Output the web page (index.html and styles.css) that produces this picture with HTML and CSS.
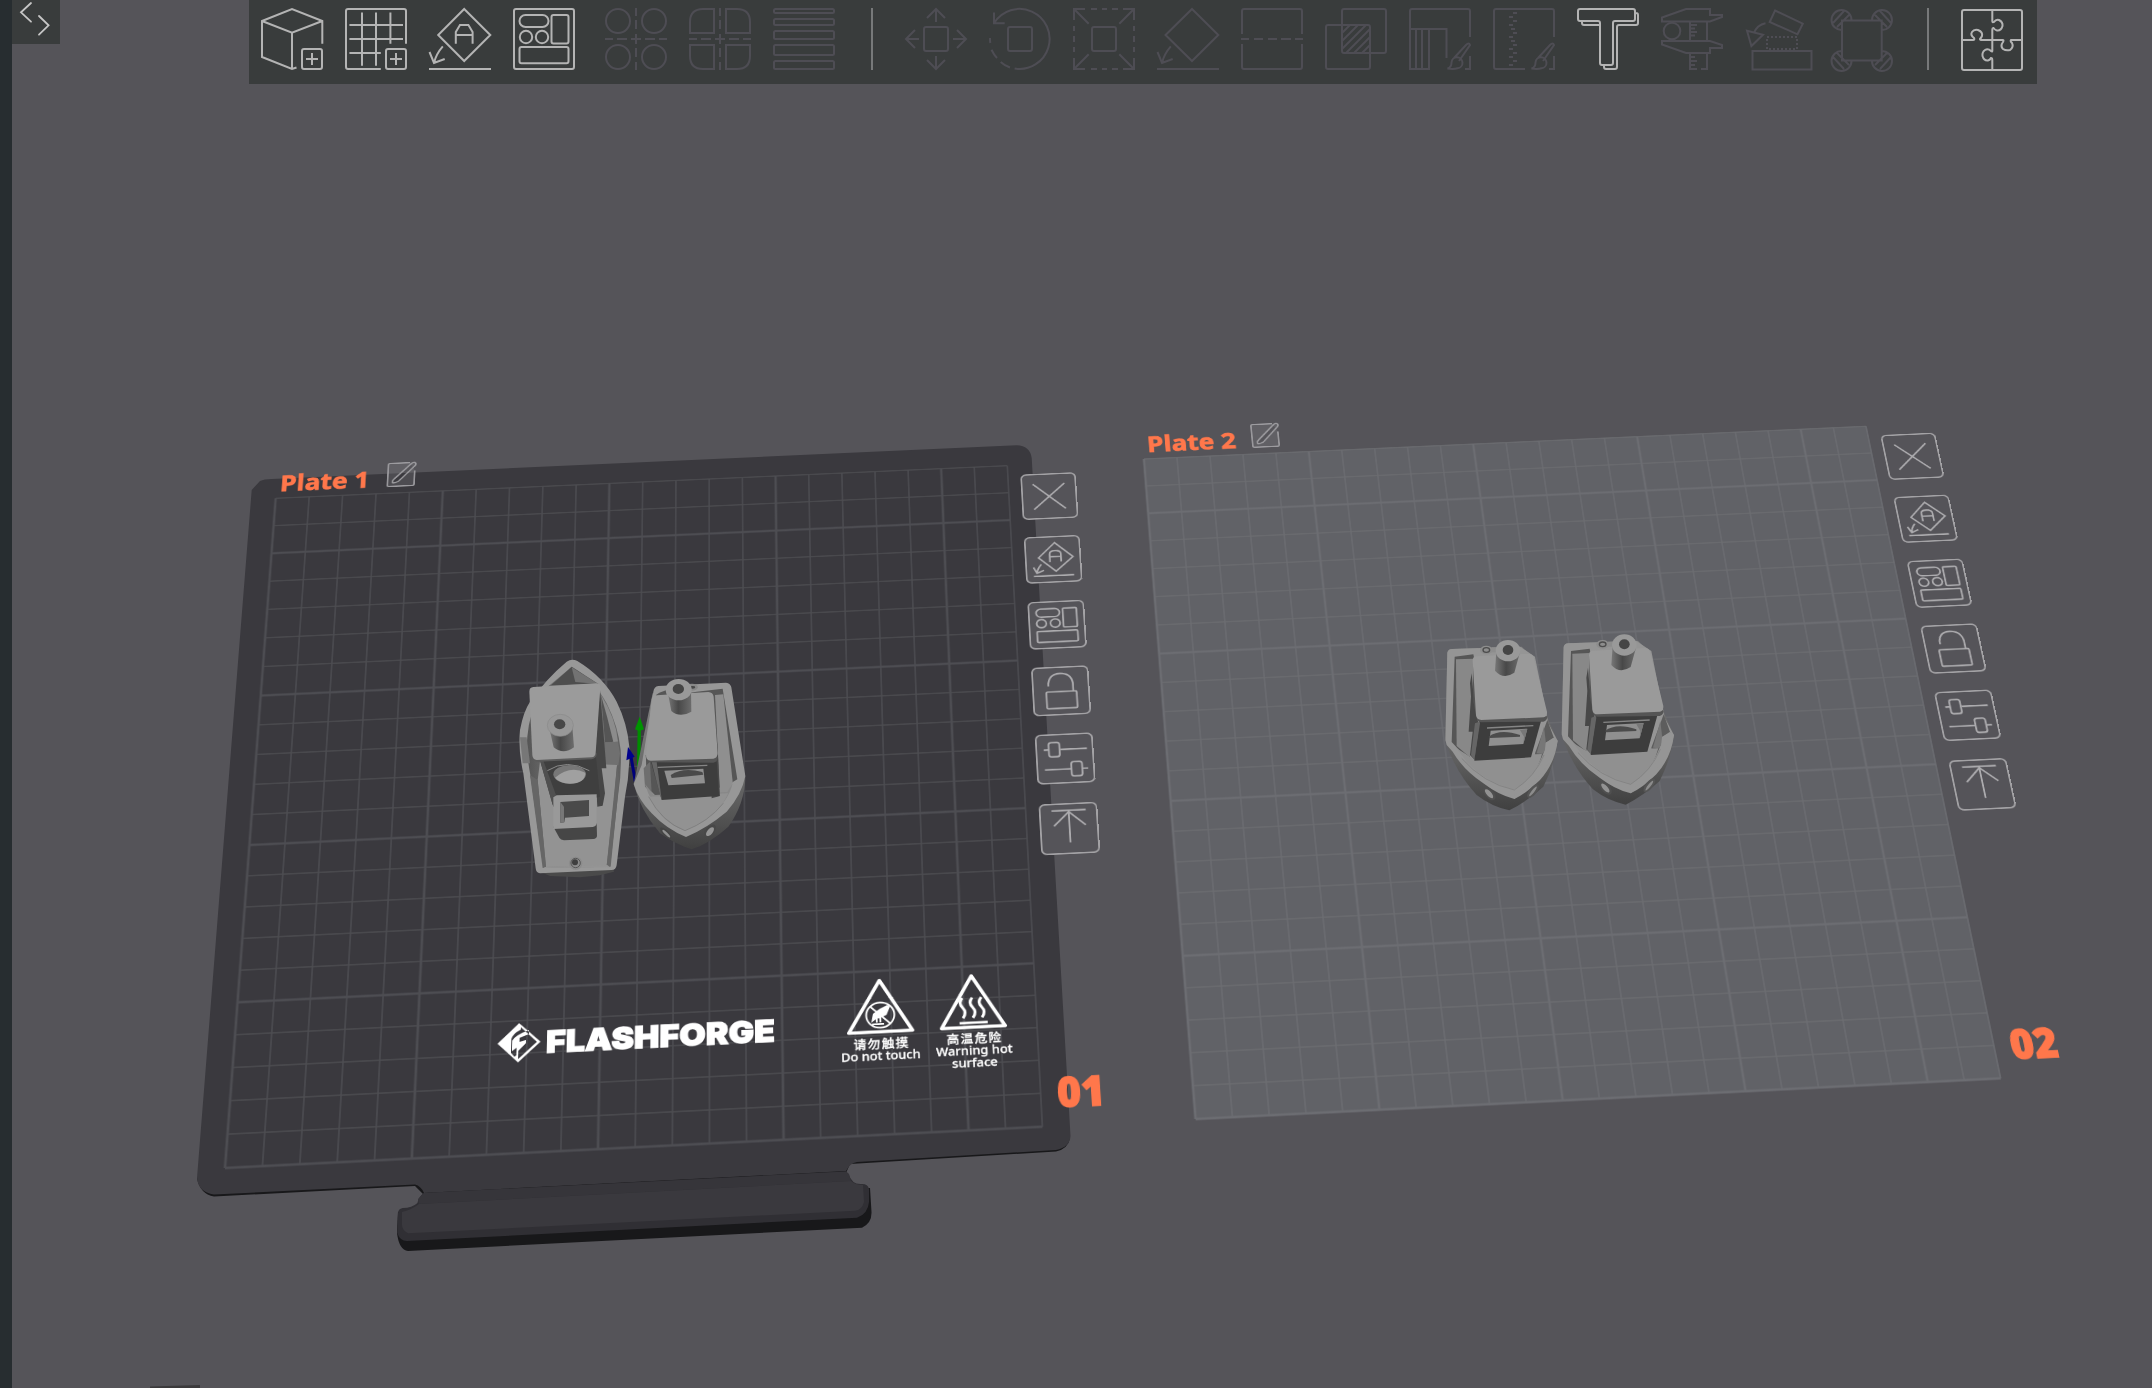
FILE: index.html
```html
<!DOCTYPE html>
<html lang="en">
<head>
<meta charset="utf-8">
<title>Prepare</title>
<link rel="stylesheet" href="styles.css">
</head>
<body>
<svg class="defs" width="0" height="0" aria-hidden="true">
  <defs>
    <linearGradient id="tube"><stop offset="0" stop-color="#777"/><stop offset=".45" stop-color="#484848"/><stop offset="1" stop-color="#6c6c6c"/></linearGradient>
    <linearGradient id="hull" x1="0" y1="0" x2="0" y2="1"><stop offset="0" stop-color="#858585"/><stop offset=".7" stop-color="#5e5e5e"/><stop offset="1" stop-color="#404040"/></linearGradient>
    <linearGradient id="cavity"><stop offset="0" stop-color="#555"/><stop offset=".5" stop-color="#858585"/><stop offset="1" stop-color="#606060"/></linearGradient>
    <symbol id="badge" viewBox="0 0 62 62"><rect x="41" y="41" width="20" height="20" rx="2"/><path d="M45 51h12M51 45v12"/></symbol>
    <g id="brush"><path d="M45 50L57 37q3-3 4 0L50 53M38.500 60.500q4-1 4-6a5.500 5.500 0 1 1 6 5.800q-4 1.200-10 .2z"/></g>
    <g id="t-close"><path d="M13 14L53 53M53 14L13 53"/></g>
    <g id="t-orient"><path d="M36 8L58 30 36 51 15 30zM29 37V25q0-5 7-5t7 5V37M29 29H43M18 40q-5 6-6 13M8 44l4 9 9-4M8 57.500H58"/></g>
    <g id="t-arrange"><rect x="8" y="9" width="29" height="12" rx="6"/><circle cx="14" cy="30.500" r="6"/><circle cx="31" cy="30.500" r="6"/><rect x="41" y="9" width="17" height="28" rx="1.500"/><rect x="8" y="42" width="50" height="16" rx="1.500"/></g>
    <g id="t-lock"><path d="M18 26V22Q20 8 33 8T48 22V34"/><rect x="15" y="34" width="37" height="24" rx="1.500"/></g>
    <g id="t-set"><path d="M8 20h6M28 20H60M8 48H40M53 48h7"/><rect x="14" y="10" width="13" height="20" rx="3"/><rect x="40" y="38" width="13" height="20" rx="3"/></g>
    <g id="t-up"><path d="M13 8H54M33.500 9V52M15 29L33.500 10 53 29"/></g>
    <g id="edit"><path d="M27 1H3Q1 1 1 3V33Q1 35 3 35H31Q33 35 33 33V13M9 24L29 2Q33-1 34 3 34 5 33 6L14 28Q6 32 7 28 7 26 9 24z"/></g>
    <g id="grid-minor"><path d="M40 0V880M80 0V880M120 0V880M160 0V880M240 0V880M280 0V880M320 0V880M360 0V880M440 0V880M480 0V880M520 0V880M560 0V880M640 0V880M680 0V880M720 0V880M760 0V880M840 0V880M880 0V880"/><path d="M0 0H880M0 40H880M0 120H880M0 160H880M0 200H880M0 240H880M0 320H880M0 360H880M0 400H880M0 440H880M0 520H880M0 560H880M0 600H880M0 640H880M0 720H880M0 760H880M0 800H880M0 840H880"/></g>
    <g id="grid-major"><path d="M0 0V880M200 0V880M400 0V880M600 0V880M800 0V880M0 80H880M0 280H880M0 480H880M0 680H880M0 880H880"/></g>
    <g id="benchy">
      <path fill="url(#hull)" d="M82 98Q84 88 96 87L305 80 330 105 385 300 413 362Q405 430 370 500 320 545 268 571 215 560 170 525 110 460 80 375L76 360z"/>
      <path fill="#959595" d="M82 98Q84 88 96 87L300 80 345 110 385 310 413 362Q405 430 360 480 320 520 283 537 235 525 190 490 130 450 98 395L80 375 76 360z"/>
      <path fill="#565656" d="M104 110L160 103 170 150 150 340 150 410 140 415 95 366z"/>
      <path fill="#888" d="M108 118L160 116 158 400 148 410 110 378z"/>
      <path fill="#5d5d5d" d="M382 300L402 355 377 368Q375 400 350 440L345 400z"/>
      <path fill="#777" d="M372 320L378 372Q378 395 366 402L350 400z"/>
      <path fill="#909090" d="M110 385L150 410 366 402Q350 470 283 508 200 490 140 425z"/>
      <path fill="#959595" d="M400 353L413 362Q395 450 283 537 283 520 283 524 370 480 377 368z"/>
      <path stroke="#7c7c7c" fill="none" stroke-width="2" d="M125 415Q190 490 283 510 345 470 372 405"/>
      <path fill="#484848" d="M155 160L160 220 175 310 165 420 150 405 158 335 146 335 153 230 150 190z"/>
      <path fill="#3d3d3d" d="M178 304L365 296 333 412 163 422z"/>
      <path fill="#666" d="M178 305L180 310 163 420 153 405 165 310z"/>
      <path fill="none" stroke="#858585" stroke-width="4" d="M201 324L340 317"/>
      <path fill="#8f8f8f" d="M212 332L322 326 310 372 206 378z"/><path fill="#4b4b4b" d="M206 350Q240 325 300 345L300 350 210 354z"/><path fill="#777" d="M300 330L322 327 310 372 312 350z"/>
      <path fill="#555" d="M160 120L160 245 170 295Q172 307 184 307L370 305Q381 302 382 290z"/>
      <path fill="#9a9a9a" d="M158 122Q158 109 170 109L325 101Q338 102 341 112L381 275Q382 290 371 292L184 300Q170 300 168 286z"/>
      <ellipse cx="199" cy="90" rx="19" ry="13" fill="#8d8d8d"/><ellipse cx="199" cy="90" rx="10" ry="7" fill="none" stroke="#4c4c4c" stroke-width="4"/><path fill="#8d8d8d" d="M215 82h20v15h-20z"/>
      <path fill="url(#tube)" d="M229 95L225 152Q250 180 283 158L299 100z"/>
      <ellipse cx="264" cy="92" rx="37" ry="32" fill="#999"/><ellipse cx="264" cy="90" rx="16" ry="15" fill="#454545"/>
      <ellipse cx="208" cy="521" rx="24" ry="13" fill="#4f4f4f" transform="rotate(48 208 521)"/><ellipse cx="207" cy="521" rx="17" ry="7" fill="#929292" transform="rotate(48 207 521)"/>
      <ellipse cx="339" cy="513" rx="25" ry="11" fill="#555" transform="rotate(-52 339 513)"/><ellipse cx="339" cy="514" rx="18" ry="4" fill="#8c8c8c" transform="rotate(-52 339 514)"/>
    </g>
  </defs>
</svg>

<aside class="edge"></aside>
<main class="viewport">
  <svg class="bed" width="2152" height="1388" viewBox="0 0 2152 1388">
    <path fill="#18181a" d="M197 1178Q200 1194 214 1196.500L415 1186 424 1195 846 1173 850 1164 1056 1151.500Q1068 1149 1070 1138L700 1130z"/>
    <path fill="#3a393e" d="M251.700 490L260 481Q264 479 271.700 479L1016.700 445.300Q1030 446 1031.700 458L1055 869 1070.500 1136Q1070 1147 1056 1150L857 1162Q850 1163 846 1171L424 1193Q421 1186 415 1184.500L214 1194.500Q198 1192 197 1178z"/>
    <path fill="#18181a" d="M398 1212L397 1233Q399 1250 408 1251L862 1227.700Q872 1223 871.500 1212L870 1188z"/>
    <path fill="#302f34" d="M424 1193Q419 1196 417.400 1203 412 1208 402.700 1208 398 1209 398 1213L397.200 1233Q400 1241 407 1241L857 1217.700Q868 1214 869 1202V1189Q868 1184 862 1184 852 1185 848.500 1174L846 1171.500z"/>
    <path fill="#36353a" d="M424 1193L846 1171.500 849 1174 851 1181 419 1204 418 1199z"/>
    <path fill="#3a393e" d="M419 1204L851 1181Q855 1185 863 1185L864 1202Q862 1210 855 1210.700L408 1233.300Q402 1230 402 1225V1212Q413 1209 419 1204z"/>
    <path fill="#3b3a3c" d="M150 1386.500L200 1385V1388H150z"/>
  </svg>

  <section class="plate plate-1">
    <svg class="surface" width="880" height="880" viewBox="0 0 880 880">
      <use href="#grid-minor" class="minor"/><use href="#grid-major" class="major"/>
      <g class="print">
        <path d="M311 723L288 747 311 771 335 747zM313 728L331 747 311 767 311 757 319 748V744L312 746V741L322 737V732Q308 737 304 744V757L309 753V762L307 764 303 759V742Q304 736 313 731z" fill-rule="evenodd"/>
        <text class="brand" x="341" y="761" textLength="251" lengthAdjust="spacingAndGlyphs">FLASHFORGE</text>
        <path class="sign" d="M708 692L743 755.500H673zM810 692L845 755.500H775z"/>
        <circle class="thin" cx="708" cy="735" r="15.500"/>
        <path d="M698 744l2-11 8-6 8-4 3 2-4 10-6 3v6h-2v-5h-2v5h-2v-4zM699 745h13v2h-13z"/><path class="thin" d="M697 724L719 746"/>
        <path class="wave" d="M799 719q-5 6 0 12t0 13M810 719q-5 6 0 12t0 13M820 719q-5 6 0 12t0 13M795 750H826"/>
        <text class="zh" x="678" y="775" textLength="60">请勿触摸</text>
        <text class="note" x="664" y="790" textLength="87" lengthAdjust="spacingAndGlyphs">Do not touch</text>
        <text class="zh" x="780" y="774" textLength="60">高温危险</text>
        <text class="note" x="768" y="789" textLength="84" lengthAdjust="spacingAndGlyphs">Warning hot</text>
        <text class="note" x="785" y="804" textLength="50" lengthAdjust="spacingAndGlyphs">surface</text>
      </g>
      <text class="name" x="4" y="-10.500" textLength="107" lengthAdjust="spacingAndGlyphs">Plate 1</text>
      <use href="#edit" class="edit" x="132" y="-45"/>
      <text class="number" x="898" y="858" textLength="52" lengthAdjust="spacingAndGlyphs">01</text>
    </svg>
    <nav class="tools">
      <svg class="tool" viewBox="0 0 66 66"><use href="#t-close"/></svg>
      <svg class="tool" viewBox="0 0 66 66"><use href="#t-orient"/></svg>
      <svg class="tool" viewBox="0 0 66 66"><use href="#t-arrange"/></svg>
      <svg class="tool" viewBox="0 0 66 66"><use href="#t-lock"/></svg>
      <svg class="tool" viewBox="0 0 66 66"><use href="#t-set"/></svg>
      <svg class="tool" viewBox="0 0 66 66"><use href="#t-up"/></svg>
    </nav>
  </section>

  <section class="plate plate-2">
    <svg class="surface" width="880" height="880" viewBox="0 0 880 880">
      <rect class="sheet" width="880" height="880"/>
      <use href="#grid-minor" class="minor"/><use href="#grid-major" class="major"/>
      <text class="name" x="5" y="-10.500" textLength="108" lengthAdjust="spacingAndGlyphs">Plate 2</text>
      <use href="#edit" class="edit" x="132" y="-45"/>
      <text class="number" x="898" y="858" textLength="52" lengthAdjust="spacingAndGlyphs">02</text>
    </svg>
    <nav class="tools">
      <svg class="tool" viewBox="0 0 66 66"><use href="#t-close"/></svg>
      <svg class="tool" viewBox="0 0 66 66"><use href="#t-orient"/></svg>
      <svg class="tool" viewBox="0 0 66 66"><use href="#t-arrange"/></svg>
      <svg class="tool" viewBox="0 0 66 66"><use href="#t-lock"/></svg>
      <svg class="tool" viewBox="0 0 66 66"><use href="#t-set"/></svg>
      <svg class="tool" viewBox="0 0 66 66"><use href="#t-up"/></svg>
    </nav>
  </section>

  <svg class="models" width="2152" height="1388" viewBox="0 0 2152 1388">
    <g transform="translate(490 640) scale(.33333)">
      <!-- boat with the bow away from the camera -->
      <path fill="#4a4a4a" d="M150 695L370 688 372 695 330 706 270 712 180 708z"/>
      <path fill="#989898" d="M230 65Q245 55 262 63 340 110 380 185 412 250 418 320 420 400 405 470L380 675Q378 690 365 690L150 700Q138 698 137 685L100 400Q84 330 90 270 100 215 120 185 170 115 230 65z"/>
      <path fill="url(#cavity)" d="M245 80Q310 115 350 190 385 260 392 330 395 400 385 460L360 680 160 684 122 410Q108 340 112 290 118 220 150 160z"/>
      <path fill="#4e4e4e" d="M245 80L325 132 183 136z"/><path fill="#727272" d="M245 82L325 132 256 126z"/>
      <path fill="#777" d="M110 292L90 292 98 370 120 370z"/>
      <path fill="#8c8c8c" d="M333 165Q378 235 384 305L345 308z"/><path fill="#555" d="M333 165Q352 230 370 305L345 308z"/>
      <path fill="#707070" d="M345 307L384 305 390 340 385 376 347 380z"/>
      <path fill="#939393" d="M143 420L150 365 381 375 372 480 350 678 168 681z"/>
      <path fill="#666" d="M120 405L143 420 168 681 158 684z"/><path fill="#666" d="M381 378L388 420 362 680 350 678z"/>
      <path fill="#949494" d="M160 684L165 681 352 675 360 682z"/>
      <path fill="#464646" d="M330 150L349 385 335 385 345 460 338 497 322 500 313 350z"/>
      <path fill="#3f3f3f" d="M150 360L318 352 330 470 190 500z"/>
      <path fill="#505050" d="M150 362L160 362 200 470 188 495z"/>
      <path fill="none" stroke="#8a8a8a" stroke-width="3" d="M172 392Q230 355 298 392"/>
      <ellipse cx="239" cy="403" rx="49" ry="28" fill="#777"/><path fill="#a0a0a0" d="M195 413Q240 375 286 398 286 430 240 431 208 430 195 413z"/>
      <path fill="#5b5b5b" d="M127 340L128 353Q130 364 145 365L305 358Q320 355 320 340z"/>
      <path fill="#9b9b9b" d="M118 155Q118 142 130 141L318 130Q331 130 331 142L317 338Q316 350 305 352L140 360Q128 358 127 345z"/>
      <path fill="url(#tube)" d="M178 265L191 322Q220 346 252 322L247 260z"/>
      <ellipse cx="211" cy="256" rx="39" ry="33" fill="#989898" stroke="#8a8a8a" stroke-width="2"/><ellipse cx="209" cy="253" rx="17" ry="15" fill="#484848"/>
      <path fill="#464646" d="M190 560L320 550 321 588Q320 596 310 597L222 601Q212 600 208 593z"/>
      <path fill="#999" d="M190 472L200 466 320 463V550Q319 560 308 561L190 567z"/>
      <path fill="#4a4a4a" d="M211 486L297 480V528L225 533 223 547 211 548z"/><path fill="#777" d="M211 486L222 500V547L211 548z"/>
      <circle cx="257" cy="670" r="20" fill="#8b8b8b"/><circle cx="257" cy="669" r="14" fill="none" stroke="#555" stroke-width="3"/><circle cx="255" cy="667" r="9" fill="#3f3f3f"/>
      <!-- origin axes -->
      <path stroke="#00007a" stroke-width="9" d="M436 425L423 350"/><path fill="#00008c" d="M414 321L434 350 409 361z"/>
      <path stroke="#008c00" stroke-width="10" d="M446 380L448 262"/><path fill="#009400" d="M449 230L462 268Q448 276 435 268z"/>
      <!-- boat with the bow towards the camera -->
      <path fill="url(#hull)" d="M488 160L700 140 766 410Q765 490 715 560 660 610 605 628 560 615 510 580 450 510 431 432z"/>
      <path fill="#979797" d="M490 155Q492 140 505 138L708 128Q722 130 724 142L766 408Q755 465 710 515 650 565 588 591 530 568 485 520 445 480 431 432L455 375 480 225z"/>
      <path fill="#565656" d="M508 158L530 150 530 170 620 155 698 146 742 418 705 440 500 470 470 440 468 360 498 165z"/>
      <path fill="#8f8f8f" d="M675 165L700 163 728 425 718 457 690 460z"/>
      <path fill="#6e6e6e" d="M461 385L480 365 485 460 465 440z"/>
      <path fill="#888" d="M465 432L492 465 712 456 728 430Q715 490 640 545L585 572Q500 545 465 432z"/>
      <path fill="#929292" d="M476 470L715 460Q690 515 640 545L585 572Q510 540 476 470z"/>
      <path fill="none" stroke="#777" stroke-width="2" d="M476 470Q515 545 585 572 655 545 700 490"/>
      <path fill="#484848" d="M670 170L683 330 690 468 665 475 660 300z"/>
      <path fill="#3d3d3d" d="M482 362L680 365 687 468 515 480z"/><path fill="#666" d="M485 366L500 366 515 478 510 465z"/>
      <path fill="none" stroke="#858585" stroke-width="4" d="M503 382L652 376"/>
      <path fill="#909090" d="M523 392L640 386 645 430 535 436z"/><path fill="#4a4a4a" d="M542 405Q580 380 637 396L640 404 545 414z"/>
      <path fill="#555" d="M467 345Q467 366 480 367L670 368Q683 366 683 350z"/>
      <path fill="#9a9a9a" d="M485 178Q487 166 500 166L655 156Q669 157 671 170L683 340Q683 354 670 356L482 362Q467 361 468 345z"/>
      <path fill="#888" d="M597 132Q620 128 624 142 620 154 600 152z"/><ellipse cx="608" cy="142" rx="8" ry="4" fill="#484848"/>
      <path fill="url(#tube)" d="M533 155L544 213Q570 235 604 215L603 150z"/>
      <ellipse cx="566" cy="149" rx="39" ry="32" fill="#999"/><ellipse cx="565" cy="147" rx="17" ry="15" fill="#454545"/>
      <ellipse cx="527" cy="579" rx="22" ry="8" fill="#444" transform="rotate(45 527 579)"/><ellipse cx="529" cy="581" rx="16" ry="4" fill="#909090" transform="rotate(45 529 581)"/>
      <ellipse cx="660" cy="573" rx="23" ry="13" fill="#484848" transform="rotate(-50 660 573)"/><ellipse cx="660" cy="575" rx="16" ry="8" fill="#959595" transform="rotate(-50 660 575)"/>
    </g>
    <g transform="translate(1420 620) scale(.33333)"><use href="#benchy"/><use href="#benchy" x="349" y="-17"/></g>
  </svg>

  <header class="top">
    <div class="toggle"><svg width="48" height="44" viewBox="12 0 48 44"><path d="M31 3L21 12.300 31 21.700M39 16L48.600 25.300 39 34.700"/></svg></div>
    <div class="toolbar">
      <svg class="icon" viewBox="0 0 62 62"><path d="M61.300 35.700V13L31 1 1 13V49L31 61 35.500 59.500M1 13L31 24.700 61.300 13M31 24.700V61"/><use href="#badge" width="62" height="62"/></svg>
      <svg class="icon" viewBox="0 0 62 62"><path d="M61 35.700V3Q61 1 59 1H3Q1 1 1 3V59Q1 61 3 61H35.800M17 4.500V57.700M31 4.500V57.700M45.400 4.500V35.700M4.400 17H58M4.400 31H58M4.400 45H35.800"/><use href="#badge" width="62" height="62"/></svg>
      <svg class="icon" viewBox="0 0 62 62"><path d="M35.200 1L61.300 27 35.200 53 9.200 27zM26.800 35.700V24L31 17H39.400L43.600 24V35.700M26.800 27H43.600M13.800 38.300Q7 46 5 55M.5 44L5 55 15.700 51M0 61H62"/></svg>
      <svg class="icon" viewBox="0 0 62 62"><rect x="1" y="1" width="60" height="60" rx="2"/><rect x="6.500" y="7" width="29" height="12" rx="6"/><rect x="38.500" y="7" width="17" height="28.500" rx="2"/><circle cx="13" cy="29" r="6.200"/><circle cx="29" cy="29" r="6.200"/><rect x="6.500" y="39" width="49" height="16.300" rx="2"/></svg>
      <svg class="icon off arrays" viewBox="0 0 62 62"><circle cx="13" cy="13" r="12"/><circle cx="49" cy="13" r="12"/><circle cx="13" cy="49" r="12"/><circle cx="49" cy="49" r="12"/><path d="M31 0V8M31 12V21M31 26V36M31 40V49M31 54V62M0 31H8M12 31H22M26 31H36M40 31H50M54 31H62"/></svg>
      <svg class="icon off" viewBox="0 0 62 62"><path d="M25 1V25H1V14Q1 1 14 1zM37 1V25H61V14Q61 1 48 1zM25 61V37H1V48Q1 61 14 61zM37 61V37H61V48Q61 61 48 61zM31 0V8M31 12V21M31 26V36M31 40V49M31 54V62M0 31H8M12 31H22M26 31H36M40 31H50M54 31H62"/></svg>
      <svg class="icon off" viewBox="0 0 62 62"><rect x="1" y="1" width="60" height="4" rx="1.500"/><rect x="1" y="11" width="60" height="6" rx="1.500"/><rect x="1" y="23" width="60" height="8" rx="1.500"/><rect x="1" y="37" width="60" height="10" rx="1.500"/><rect x="1" y="53" width="60" height="8" rx="1.500"/></svg>
      <i class="sep"></i>
      <svg class="icon off" viewBox="0 0 62 62"><rect x="19" y="19" width="24" height="24" rx="2"/><path d="M31 14V1M22 10L31 1 40 10M31 48V61M22 52L31 61 40 52M14 31H1M10 22L1 31 10 40M48 31H61M52 22L61 31 52 40"/></svg>
      <svg class="icon off" viewBox="0 0 62 62"><rect x="19" y="19" width="24" height="24" rx="2"/><path d="M5 15.300A30 30 0 1 1 25.600 60.500M5 4.500V15.300H15.700M1 30Q1 33 1.300 35M2.500 41.700Q5 47 8 50M11.700 54Q16 58 21 59.500"/></svg>
      <svg class="icon off" viewBox="0 0 62 62"><rect x="19" y="19" width="24" height="24" rx="2"/><path d="M15.700 15.700L1 1M1 12V1H12M46.300 15.700L61 1M50 1H61V12M15.700 46.300L1 61M1 50V61H12M46.300 46.300L61 61M61 50V61H50M18 1H24M29 1H34M39 1H45M18 61H24M29 61H34M39 61H45M1 18V23M1 28V34M1 39V44M61 18V23M61 28V34M61 39V44"/></svg>
      <svg class="icon off" viewBox="0 0 62 62"><path d="M35 1L61.300 27 35 53 8.500 27zM13.800 38.300Q7 46 5 55M.5 44L5 55 15.700 51M0 61H62"/></svg>
      <svg class="icon off" viewBox="0 0 62 62"><path d="M1 26V3Q1 1 3 1H59Q61 1 61 3V26M1 36V59Q1 61 3 61H59Q61 61 61 59V36M0 31H8M13 31H22M27 31H36M40 31H50M54 31H62"/></svg>
      <svg class="icon off" viewBox="0 0 62 62"><rect x="17" y="1" width="44" height="44" rx="2"/><rect x="1" y="17" width="44" height="44" rx="2"/><path d="M17 25L25 17M17 33L33 17M17 41L41 17M21 45L45 21M29 45L45 29M37 45L45 37"/></svg>
      <svg class="icon off" viewBox="0 0 62 62"><path d="M61 29V3Q61 1 59 1H3Q1 1 1 3V61H20V21M7 21V61M13 21V61M1 21H37.500V50M56 61H61V48"/><use href="#brush"/></svg>
      <svg class="icon off" viewBox="0 0 62 62"><path d="M61 29V3Q61 1 59 1H3Q1 1 1 3V59Q1 61 3 61H32M56 61H61V48M20 5H24M16 9H20M20 13H24M16 17H20M18 21H22M20 25H24M16 29H20M18 33H22M20 37H24M16 41H20M20 45H24M16 49H20M20 53H24M16 57H20"/><use href="#brush"/></svg>
      <svg class="icon" viewBox="0 0 62 62"><path d="M3 1H56Q58 1 58 3V11Q58 13 56 13H38Q36 13 36 15V55Q36 57 34 57H25Q23 57 23 55V15Q23 13 21 13H3Q1 13 1 11V3Q1 1 3 1zM5 13V15Q5 17 7 17H23M58 5H59Q61 5 61 7V15Q61 17 59 17H42Q40 17 40 19V59Q40 61 38 61H29Q27 61 27 59V57"/></svg>
      <svg class="icon off" viewBox="0 0 62 62"><path d="M1 13.500V9.500L25 1H49V7H61V9L49 13.500zM1 33H49L61 37V40H49V45H25L1 36.500zM29 14V33M46 14V33M29 45V61H36M46 45V61H40M29 17H36M29 20.500H34M29 24H36M29 27.500H34M29 49H34M29 53H36M29 57H34"/><circle cx="11" cy="23" r="8.300"/></svg>
      <svg class="icon off" viewBox="0 0 62 62"><path d="M30 2.500L57.800 15.700 52.500 26.300 24.700 14zM20.500 15.300Q12 17 9 25M2 22.700L18 26.700 6.400 38zM7.500 43H66.500V61.500H7.500z"/><path stroke-dasharray="2 2" d="M22 29H52V41H22z"/></svg>
      <svg class="icon off" viewBox="0 0 62 62"><path d="M13 12.500H52.700V52.500H13zM13 22A10 10 0 1 1 22.500 12.500M43 12.500A10 10 0 1 1 52.700 22M13 43A10 10 0 1 0 22.500 52.500M43 52.500A10 10 0 1 0 52.700 43M4 15L15 3M8 19L20 7M62 15L51 3M58 19L46 7M4 49L15 61M8 45L20 57M62 49L51 61M58 45L46 57"/></svg>
      <i class="sep"></i>
      <svg class="icon" viewBox="0 0 62 62"><rect x="1" y="2" width="60" height="60" rx="2"/><path d="M31.300 2V13Q31.300 15 33 14 35 11 38 12 42 14 41.500 18 40 23 36 22.500 34 22 32.500 20 31.300 20 31.300 22V43Q31.300 44 30 43 27 40 24 42 21 44 21.500 48 23 53 27 52.500 29 52 30 50 31.300 50 31.300 52V62M1 32H12Q14 32 13 30 9 27 11 24 13 21 17 22 22 24 21 28 20 30 19 31 19 32 21 32H42Q43 32 42 34 39 38 42 41 45 43 49 42 53 39 51 35 49 33 50 32H61"/></svg>
    </div>
  </header>
</main>
</body>
</html>
```
FILE: styles.css
```css
* { box-sizing: border-box; }

body {
  margin: 0;
  width: 2152px;
  height: 1388px;
  display: flex;
  overflow: hidden;
  position: relative;
  background: #555459;
  font-family: "Open Sans", "Noto Sans CJK SC", sans-serif;
}

.defs { position: absolute; }

.edge {
  width: 12px;
  background: #272d30;
}

.viewport { flex: 1; }

.bed,
.models {
  position: absolute;
  left: 0;
  top: 0;
}

/* Top bar */
.top {
  position: relative;
  display: flex;
  align-items: flex-start;
}

.toggle {
  width: 48px;
  height: 44px;
  background: #393c3c;
}

.toggle svg {
  display: block;
  fill: none;
  stroke: #c6c6c6;
  stroke-width: 1.8;
  stroke-linecap: round;
}

.toolbar {
  margin-left: 189px;
  width: 1788px;
  height: 84px;
  padding: 8px 12px;
  display: flex;
  gap: 22px;
  background: #393c3c;
}

.icon {
  flex: none;
  width: 62px;
  height: 62px;
  overflow: visible;
  fill: none;
  stroke: #b4b4b4;
  stroke-width: 2;
}

.icon.off { stroke: #4e4d54; }
.arrays { margin-left: 8px; }

.sep {
  flex: none;
  width: 2px;
  height: 62px;
  margin: 0 10px 0 14px;
  background: #77797a;
}

/* Build plates: flat 880px sheets seen through the scene camera */
.plate {
  position: absolute;
  left: 0;
  top: 0;
  width: 880px;
  height: 880px;
  transform-origin: 0 0;
}

.plate-1 {
  transform: matrix3d(.838898, -.033557, 0, .000007484, -.084523, .62133, 0, -.0001196, 0, 0, 1, 0, 275.7, 498.3, 0, 1);
}

.plate-2 {
  transform: matrix3d(.832693, -.034364, 0, .00000656, -.082761, .61767, 0, -.00011826, 0, 0, 1, 0, 1144, 459, 0, 1);
}

.surface {
  position: absolute;
  left: 0;
  top: 0;
  overflow: visible;
}

.sheet { fill: #616267; }

.minor, .major { fill: none; stroke: #4d4d52; }
.plate-2 .minor, .plate-2 .major { stroke: #6c6d72; }
.minor { stroke-width: 1.6; }
.major { stroke-width: 2.8; }

.name, .number { fill: #ff774b; stroke: #ff774b; }
.name { font-size: 33px; font-weight: 700; stroke-width: 1; }
.number { font-size: 49px; font-weight: 800; stroke-width: 1.5; }

.edit {
  fill: rgba(130, 130, 134, .25);
  stroke: #9c9b9f;
  stroke-width: 1.9;
}

.tools {
  position: absolute;
  left: 894.6px;
  top: 14.2px;
  display: flex;
  flex-direction: column;
  gap: 25.3px;
}

.tool {
  width: 67px;
  height: 67px;
  border: 2.2px solid #a3a2a5;
  border-radius: 7px;
  background: #555459;
  fill: none;
  stroke: #acabae;
  stroke-width: 2.2;
}

.print { fill: #fff; }
.brand { font-family: Inter, sans-serif; font-size: 37px; font-weight: 900; stroke: #fff; stroke-width: 1.4; }
.sign { fill: none; stroke: #fff; stroke-width: 4; stroke-linejoin: round; }
.thin { fill: none; stroke: #fff; stroke-width: 2; }
.wave { fill: none; stroke: #fff; stroke-width: 3.2; }
.zh { font-family: "Noto Sans CJK SC", sans-serif; font-size: 14px; font-weight: 500; stroke: #fff; stroke-width: .3; }
.note { font-family: "Noto Sans", sans-serif; font-size: 15px; font-weight: 500; stroke: #fff; stroke-width: .3; }
```
